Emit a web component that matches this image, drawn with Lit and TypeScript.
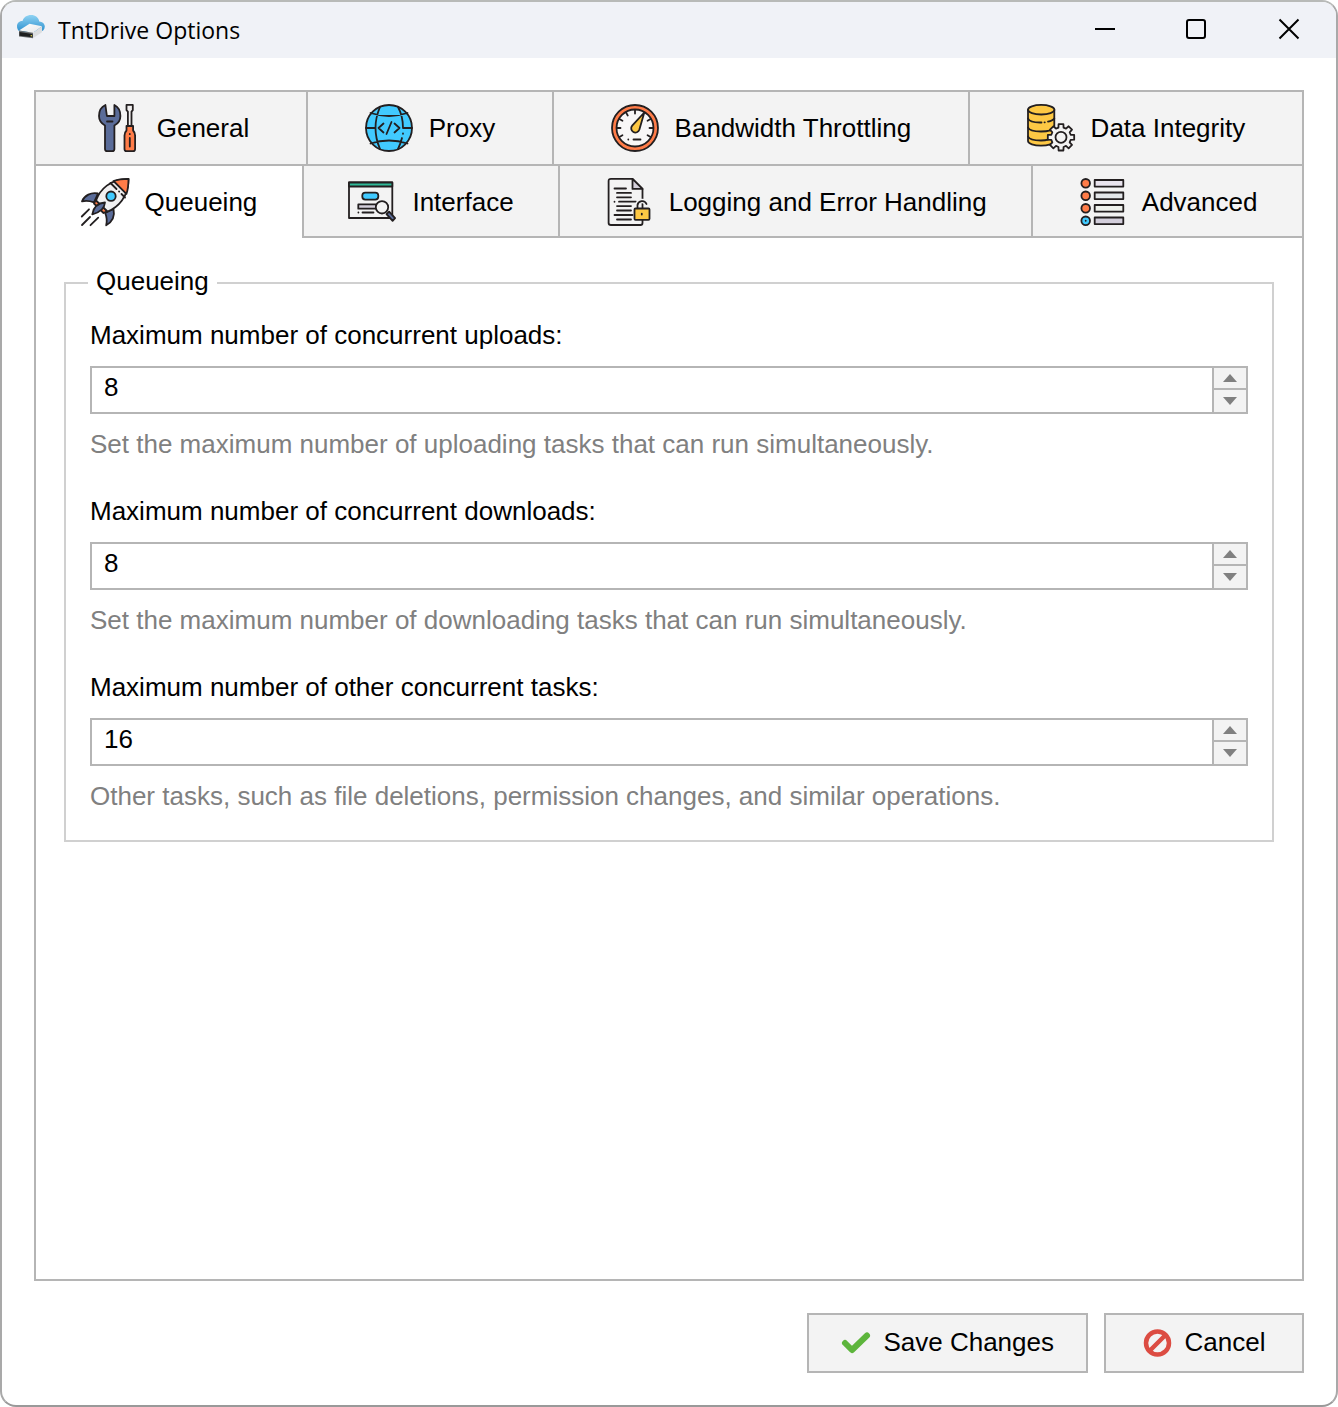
import { LitElement, html, css, svg, nothing } from "lit";
import type { SVGTemplateResult } from "lit";
import { customElement, property, state } from "lit/decorators.js";
import { classMap } from "lit/directives/class-map.js";

const NAVY = "#5a6c99";
const ORANGE = "#ff7c48";
const YELLOW = "#fdc844";
const BLUE = "#41caff";

const gearPath = (cx: number, cy: number, outer: number, inner: number): string => {
  const points: string[] = [];
  for (let i = 0; i < 8; i++) {
    const base = (i * Math.PI) / 4;
    const corners: [number, number][] = [
      [-0.26, inner],
      [-0.18, outer],
      [0.18, outer],
      [0.26, inner],
    ];
    for (const [delta, radius] of corners) {
      const x = cx + radius * Math.sin(base + delta);
      const y = cy - radius * Math.cos(base + delta);
      points.push(`${x.toFixed(2)} ${y.toFixed(2)}`);
    }
  }
  return `M${points.join("L")}Z`;
};

const gaugeAngles = [-120, -90, -60, -30, 0, 60, 90, 120];

const icons: Record<string, SVGTemplateResult> = {
  general: svg`
    <path d="M12.4 1C8 3 6 7.500 6 12c0 4 2.500 7.500 6 9.500V45q0 2.200 2.200 2.200h5q2.200 0 2.200-2.200V21.500c4-2 6-5.500 6-9.500 0-4.500-2-9-6-11v11h-7.500z" fill=${NAVY}/>
    <path d="M14 17.500h5.500"/>
    <path d="M33.500 .9h6.300v5.300l-1.300 1.500V22h-3.600V7.700l-1.400-1.500z" fill="#f1efef"/>
    <path d="M33.500 22h6.600v4.500q2 2 2 5V45q0 2.200-2 2.200h-6.600q-2 0-2-2.200V31.500q0-3 2-5z" fill=${ORANGE}/>
    <path d="M36.800 30v.2M36.800 34v8.500"/>`,
  proxy: svg`
    <circle cx="24" cy="24" r="23" fill=${BLUE}/>
    <path d="M15 3Q6 24 15 45M33 3Q38 12 38 24M1 24h9M38 24h9M38 29.500v.3M37 34q-1.500 6-4 11M5.500 9q18.500 6 37 0M5.500 39.500q18.500-6 37 0"/>
    <path d="M18.500 19.500L13.500 24l5 4.500M29.500 19.500l5 4.500-5 4.500M26.500 18l-5 12"/>`,
  bandwidth: svg`
    <circle cx="24" cy="24" r="23" fill=${ORANGE}/>
    <circle cx="24" cy="24" r="18.500" fill="#f8f7f7"/>
    ${gaugeAngles.map((a) => svg`<path d="M24 6v3.500" transform="rotate(${a} 24 24)"/>`)}
    <path d="M33.300 8.500L21.200 21.600a4.200 4.200 0 1 0 7.200 4z" fill=${YELLOW}/>
    <path d="M17.300 35.500v.1M22.500 35.500h7"/>`,
  integrity: svg`
    <path d="M1 5.700V37c0 2.600 6 4.700 13 4.700s13.300-2.100 13.300-4.700V5.700z" fill=${YELLOW}/>
    <ellipse cx="14.200" cy="5.700" rx="13.200" ry="4.800" fill=${YELLOW}/>
    <path d="M1 14.500c1 2.500 6 4 12 4h1.500M17.500 18.300h.3M21 17.600q5-1 6.300-3.100M1 23.500c1 2.500 6 4 13 4s12-1.500 13.300-4M1 32.500c1 2.500 6 4 13 4 3 0 5-.2 7-.8"/>
    <path d=${gearPath(34, 33.3, 13.4, 10)} fill="#f3f3f3"/>
    <circle cx="34" cy="33.300" r="5.500" fill="#f3f3f3"/>`,
  queueing: svg`
    <path d="M17 15.500C10 14 3.500 17.500 1 23.300c4-1 8-.5 12 1z" fill=${NAVY}/>
    <path d="M32.500 31c1.500 7-1.500 13-7.300 16.200 1-4 .6-8.200-1-12.200z" fill=${NAVY}/>
    <path d="M15 21.500l-2 4 9.500 9.500 4-2z" fill=${ORANGE}/>
    <path d="M15 22.500C19 11.500 29 1 47.500 .9 47.500 19 37 29.500 26.500 33.500z" fill="#f1f0f1"/>
    <path d="M32.500 3C37 1.400 42 .9 47.500 .9c0 5.500-.5 10.500-2.100 15z" fill=${ORANGE}/>
    <path d="M29.500 5l6 6M38 13.400l.2.200M40.500 16l3.500 3.500"/>
    <circle cx="30" cy="18.200" r="4.700" fill=${BLUE}/>
    <path d="M24 24.500c-.5 5.500-5 10-12.700 11.800C12.500 29 17.500 25 24 24.500z" fill=${NAVY}/>
    <path d="M.8 38.500L8 31.300M1 47l8-8M9.500 47.200l7.700-7.600"/>`,
  interface: svg`
    <path d="M1 4.500h43.300V40H1z" fill="#f3f3f3"/>
    <path d="M1 4.500h43.300v4H1z" fill="#2eb997"/>
    <rect x="14.300" y="14.600" width="16" height="7" rx="3" fill=${BLUE}/>
    <path d="M10.300 26.400H29v4.300H10.300z" fill="#d5d0db"/>
    <path d="M10.400 34.500v.1M14.500 34.500h11"/>
    <circle cx="34" cy="29.300" r="6.200" fill="#f3f3f3"/>
    <path d="M38.500 36.200l2.600-2.600 6 6.600-2.500 2.700z" fill=${NAVY}/>`,
  logging: svg`
    <path d="M6 .9h21.500l10 10V45q0 2-2 2H6q-2.400 0-2.400-2V3Q3.600.9 6 .9z" fill="#f3f3f3"/>
    <path d="M27.500 .9v10h10z" fill="#d5d0db"/>
    <path d="M9.500 10.500H21M12 14.900h14M12 19.300h14M9.500 23.700v.1M14 23.700h17M12 28.100h14M12 32.500h14M9.500 37h18M12 41.500h14"/>
    <path d="M32.500 30.500V27a4.700 4.700 0 0 1 9 -1" fill="none" stroke="#f3f3f3" stroke-width="4.500"/>
    <path d="M32.500 30.500V27a4.700 4.700 0 0 1 9 -1"/>
    <rect x="29.500" y="30.500" width="15" height="11.300" rx="1" fill=${YELLOW}/>
    <path d="M36.800 35.700v.8"/>`,
  advanced: svg`
    ${[5.3, 17.8, 30.3, 42.8].map(
      (y, i) => svg`
      <circle cx="7.700" cy=${y} r="4.300" fill=${i === 3 ? BLUE : ORANGE}/>
      <rect x="16.700" y=${y - 3.3} width="28.600" height="6.600" fill=${["#e9e4ee", "#e4e7ea", "#eef1ec", "#d3cedb"][i]}/>`,
    )}
    <path d="M7.700 42.700v.1"/>`,
};

interface TabInfo {
  id: string;
  label: string;
}

const tabRows: TabInfo[][] = [
  [
    { id: "general", label: "General" },
    { id: "proxy", label: "Proxy" },
    { id: "bandwidth", label: "Bandwidth Throttling" },
    { id: "integrity", label: "Data Integrity" },
  ],
  [
    { id: "queueing", label: "Queueing" },
    { id: "interface", label: "Interface" },
    { id: "logging", label: "Logging and Error Handling" },
    { id: "advanced", label: "Advanced" },
  ],
];

@customElement("number-field")
class NumberField extends LitElement {
  @property() label = "";
  @property() hint = "";
  @property({ type: Number }) value = 0;

  static styles = css`
    :host {
      display: block;
    }
    .label {
      display: block;
      line-height: 30px;
    }
    .box {
      display: flex;
      height: 44px;
      margin: 16px 0;
      border: 2px solid #b5b5b5;
      background: #fff;
    }
    .input {
      flex: 1;
      min-width: 0;
      box-sizing: border-box;
      margin: 0;
      padding: 0 12px 6px;
      border: 0;
      outline: 0;
      background: transparent;
      color: #000;
      font: inherit;
      appearance: textfield;
      -moz-appearance: textfield;
    }
    .input::-webkit-inner-spin-button,
    .input::-webkit-outer-spin-button {
      appearance: none;
      margin: 0;
    }
    .spin {
      display: grid;
      grid-template-rows: 20px 22px;
      gap: 2px;
      width: 32px;
      border-left: 2px solid #b5b5b5;
      background: #b5b5b5;
    }
    .step {
      display: grid;
      place-items: center;
      padding: 0;
      border: 0;
      background: #f3f3f3;
    }
    .arrow {
      display: block;
      width: 14px;
      height: 8px;
      fill: #808080;
    }
    .hint {
      margin: 0;
      line-height: 28px;
      color: #808080;
    }
  `;

  private step(delta: number) {
    this.value = Math.max(1, this.value + delta);
  }

  render() {
    return html`
      <label class="label" for="value">${this.label}</label>
      <div class="box">
        <input
          class="input"
          id="value"
          type="number"
          min="1"
          aria-describedby="hint"
          .value=${String(this.value)}
          @change=${(e: Event) => (this.value = Number((e.target as HTMLInputElement).value))}
        />
        <div class="spin">
          <button class="step" type="button" aria-label="Increase" @click=${() => this.step(1)}>
            <svg class="arrow" viewBox="0 0 14 8"><path d="M7 0l7 8H0z" /></svg>
          </button>
          <button class="step" type="button" aria-label="Decrease" @click=${() => this.step(-1)}>
            <svg class="arrow" viewBox="0 0 14 8"><path d="M0 0h14L7 8z" /></svg>
          </button>
        </div>
      </div>
      <p class="hint" id="hint">${this.hint}</p>
    `;
  }
}

@customElement("app-root")
class AppRoot extends LitElement {
  @state() private selected = "queueing";

  static styles = css`
    :host {
      display: block;
      font: 26px/30px "Liberation Sans", Arial, sans-serif;
      color: #000;
    }
    .window {
      display: flex;
      flex-direction: column;
      box-sizing: border-box;
      min-height: 100vh;
      border: 2px solid;
      border-color: #b8bab8 #a9a9a9 #999;
      border-radius: 16px;
      background: #fff;
      overflow: hidden;
    }
    .titlebar {
      display: flex;
      align-items: center;
      height: 56px;
      padding: 0 1px 0 14px;
      background: #f0f2f7;
    }
    .logo {
      width: 30px;
      height: 26px;
      margin-bottom: 6px;
    }
    .title {
      flex: 1;
      margin: 0 0 0 12px;
      font: 400 23px/30px "Open Sans", "Noto Sans", sans-serif;
    }
    .caption {
      display: grid;
      place-items: center;
      width: 92px;
      height: 56px;
      padding: 0 0 2px;
      border: 0;
      background: transparent;
    }
    .glyph {
      width: 22px;
      height: 22px;
      fill: none;
      stroke: #000;
      stroke-width: 2;
    }
    .content {
      display: flex;
      flex: 1;
      flex-direction: column;
      padding: 32px;
    }
    .tabs {
      display: flex;
      flex: 1;
      flex-direction: column;
      border: 2px solid #b5b5b5;
    }
    .row {
      display: flex;
    }
    .tab {
      display: flex;
      flex: 1 1 auto;
      align-items: center;
      justify-content: center;
      gap: 16px;
      height: 74px;
      box-sizing: border-box;
      padding: 0;
      border: solid #b5b5b5;
      border-width: 0 2px 2px 0;
      background: #f3f3f3;
      color: inherit;
      font: inherit;
      white-space: nowrap;
    }
    .row + .row .tab {
      height: 72px;
      padding-top: 2px;
    }
    .tab:last-child {
      border-right-width: 0;
    }
    .row + .row .tab.selected {
      padding-top: 0;
      border-bottom-width: 0;
      background: #fff;
    }
    .icon {
      flex: none;
      width: 48px;
      height: 48px;
      overflow: visible;
      fill: none;
      stroke: #231f20;
      stroke-width: 1.8;
      stroke-linecap: round;
      stroke-linejoin: round;
    }
    .panel {
      flex: 1;
      padding: 28px;
    }
    .group {
      display: flex;
      flex-direction: column;
      gap: 38px;
      min-width: 0;
      margin: 0;
      padding: 20px 24px 30px;
      border: 2px solid #d0d0d0;
    }
    .legend {
      margin-left: -2px;
      padding: 0 8px 4px;
    }
    .footer {
      display: flex;
      justify-content: flex-end;
      gap: 16px;
      padding-top: 32px;
    }
    .button {
      display: flex;
      align-items: center;
      justify-content: center;
      gap: 14px;
      box-sizing: border-box;
      min-width: 200px;
      height: 60px;
      padding: 0 32px 2px;
      border: 2px solid #b5b5b5;
      background: #f3f3f3;
      color: inherit;
      font: inherit;
    }
    .mark {
      width: 28px;
      height: 28px;
      overflow: visible;
      fill: none;
      stroke-linecap: round;
      stroke-linejoin: round;
    }
  `;

  private renderTab(tab: TabInfo) {
    const selected = this.selected === tab.id;
    return html`
      <button
        class=${classMap({ tab: true, selected })}
        type="button"
        role="tab"
        aria-selected=${selected}
        @click=${() => (this.selected = tab.id)}
      >
        <svg class="icon" viewBox="0 0 48 48" aria-hidden="true">${icons[tab.id]}</svg>
        <span>${tab.label}</span>
      </button>
    `;
  }

  private renderQueueing() {
    return html`
      <fieldset class="group">
        <legend class="legend">Queueing</legend>
        <number-field
          label="Maximum number of concurrent uploads:"
          hint="Set the maximum number of uploading tasks that can run simultaneously."
          value="8"
        ></number-field>
        <number-field
          label="Maximum number of concurrent downloads:"
          hint="Set the maximum number of downloading tasks that can run simultaneously."
          value="8"
        ></number-field>
        <number-field
          label="Maximum number of other concurrent tasks:"
          hint="Other tasks, such as file deletions, permission changes, and similar operations."
          value="16"
        ></number-field>
      </fieldset>
    `;
  }

  render() {
    return html`
      <div class="window">
        <header class="titlebar">
          <svg class="logo" viewBox="0 0 30 26" aria-hidden="true">
            <defs>
              <linearGradient id="sky" x1="0" y1="0" x2="0" y2="1">
                <stop offset="0" stop-color="#8fd3f3" />
                <stop offset="1" stop-color="#2b8fce" />
              </linearGradient>
              <linearGradient id="top" x1="0" y1="0" x2="1" y2="1">
                <stop offset="0" stop-color="#fff" />
                <stop offset="1" stop-color="#e6e7e8" />
              </linearGradient>
            </defs>
            <path d="M4.500 18C2 17 .8 14.500 1 11.800 1.200 9 3.500 7 6.500 7 7.500 3.200 11 1 15 1c4.500 0 7.500 2.600 8.300 6.400C26.500 7.600 28.800 9.800 28.800 12.500c0 3-2 5-5.300 5.500z" fill="url(#sky)" />
            <path d="M3 16.500l10.500-6.700 12.500 2.400L17 18.700z" fill="url(#top)" />
            <path d="M17 18.700l9-6.500v6L17 24.300z" fill="#dcdee0" />
            <path d="M3 16.500l14 2.200v5.600L3 22.600z" fill="#6a6e70" />
            <path d="M3.500 18l13 2v3.300l-13-1.600z" fill="#1d1f20" />
            <circle cx="15.300" cy="21.700" r=".8" fill="#e3d94a" />
          </svg>
          <h1 class="title">TntDrive Options</h1>
          <button class="caption" type="button" aria-label="Minimize">
            <svg class="glyph" viewBox="0 0 22 22"><path d="M1 11h20" /></svg>
          </button>
          <button class="caption" type="button" aria-label="Maximize">
            <svg class="glyph" viewBox="0 0 22 22"><rect x="1" y="2" width="18" height="18" rx="2" /></svg>
          </button>
          <button class="caption" type="button" aria-label="Close">
            <svg class="glyph" viewBox="0 0 22 22"><path d="M1.500 1.500l19 19M20.500 1.500l-19 19" /></svg>
          </button>
        </header>
        <main class="content">
          <section class="tabs">
            <div role="tablist" aria-label="Options">
              ${tabRows.map((row) => html`<div class="row" role="presentation">${row.map((tab) => this.renderTab(tab))}</div>`)}
            </div>
            <div class="panel" role="tabpanel">
              ${this.selected === "queueing" ? this.renderQueueing() : nothing}
            </div>
          </section>
          <footer class="footer">
            <button class="button" type="button">
              <svg class="mark" viewBox="0 0 28 28" aria-hidden="true">
                <path d="M4 15l7 7L26 7.500" stroke="#5db53c" stroke-width="6" />
              </svg>
              <span>Save Changes</span>
            </button>
            <button class="button" type="button">
              <svg class="mark" viewBox="0 0 28 28" aria-hidden="true" stroke="#dc4c42" stroke-width="4.500">
                <circle cx="14.500" cy="15" r="11.500" />
                <path d="M7 22.500l15-15" />
              </svg>
              <span>Cancel</span>
            </button>
          </footer>
        </main>
      </div>
    `;
  }
}
